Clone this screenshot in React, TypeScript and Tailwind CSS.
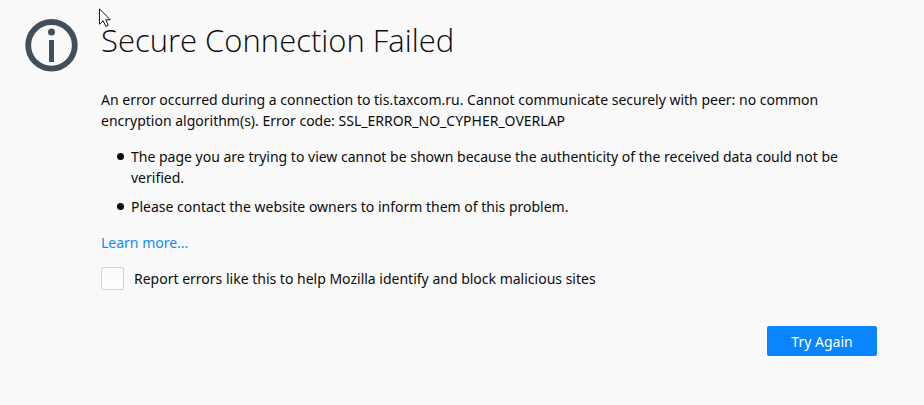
import React from 'react';

const InfoIcon: React.FC = () => (
  <svg width="53" height="53" viewBox="0 0 53 53" className="shrink-0" aria-hidden="true">
    <circle cx="26.5" cy="26.3" r="23.3" fill="none" stroke="#424f5a" strokeWidth="5.8" />
    <circle cx="26.5" cy="13" r="3.5" fill="#424f5a" />
    <rect x="24" y="21" width="5" height="22" fill="#424f5a" />
  </svg>
);

const Pointer: React.FC = () => (
  <svg
    width="14"
    height="21"
    viewBox="0 0 14 21"
    className="absolute top-2 left-[99px] pointer-events-none"
    aria-hidden="true"
  >
    <path
      d="M0.5 0.8V16.2L4.2 12.8L6.8 18.4L9.2 17.3L6.8 11.8H11.3Z"
      fill="#fff"
      stroke="#15151f"
      strokeWidth="1"
    />
  </svg>
);

const problems = [
  'The page you are trying to view cannot be shown because the authenticity of the received data could not be verified.',
  'Please contact the website owners to inform them of this problem.',
];

export default function App() {
  return (
    <div className="relative min-h-screen bg-[#f9f9f9] text-[#0c0c0d] font-['Noto_Sans',sans-serif] text-sm leading-[21px]">
      <main className="flex gap-[23px] pt-[19px] pl-[25px] pr-[47px] pb-12">
        <InfoIcon />
        <div className="flex-1 min-w-0">
          <h1 className="font-['Open_Sans',sans-serif] text-[31px] leading-[42px] font-light">
            Secure Connection Failed
          </h1>

          <p className="mt-7">
            An error occurred during a connection to tis.taxcom.ru. Cannot communicate securely with
            peer: no common encryption algorithm(s). Error code: SSL_ERROR_NO_CYPHER_OVERLAP
          </p>

          <ul className="mt-[15px] flex flex-col gap-2">
            {problems.map((problem) => (
              <li key={problem} className="flex">
                <span className="mt-[7px] ml-4 mr-[7px] size-[7px] shrink-0 rounded-full bg-[#0c0c0d]" />
                <span>{problem}</span>
              </li>
            ))}
          </ul>

          <p className="mt-[15px]">
            <a href="#learn-more" className="text-[#0a8dff] hover:underline">
              Learn more...
            </a>
          </p>

          <label className="mt-[14px] flex items-center gap-[10px]">
            <input
              type="checkbox"
              className="size-[23px] shrink-0 appearance-none rounded-xs border border-[#d3d3d6] bg-linear-to-b from-[#fafafa] to-white checked:from-[#0a84ff] checked:to-[#0a84ff]"
            />
            <span>Report errors like this to help Mozilla identify and block malicious sites</span>
          </label>

          <div className="mt-9 flex justify-end">
            <button
              type="button"
              className="h-[30px] w-[110px] rounded-xs bg-[#0a84ff] text-white hover:bg-[#0060df]"
            >
              Try Again
            </button>
          </div>
        </div>
      </main>
      <Pointer />
    </div>
  );
}
